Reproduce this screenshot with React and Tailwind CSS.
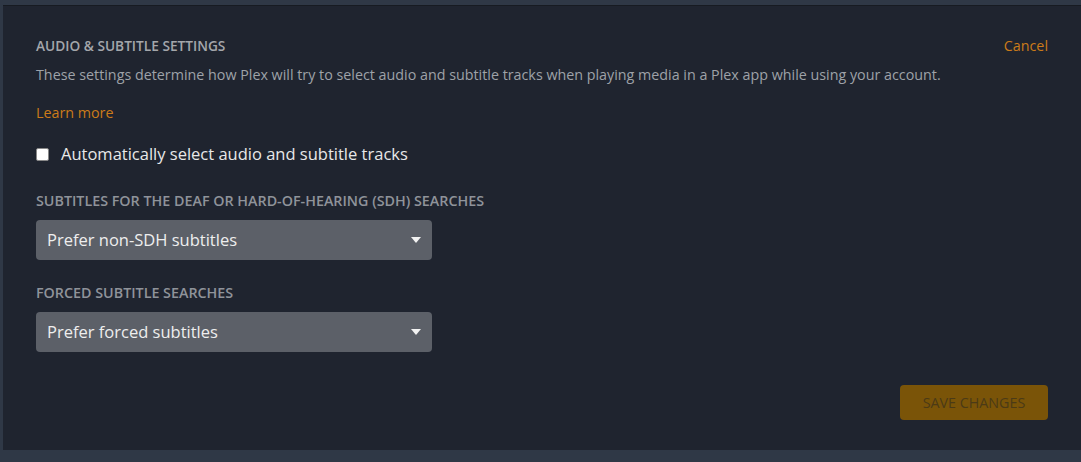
import React from "react";

const Caret = () => (
  <svg width="10" height="6" viewBox="0 0 10 6" className="shrink-0">
    <path d="M0 0 H10 L5 6 Z" fill="#f2f2f2" />
  </svg>
);

const Select = ({ value }) => (
  <div className="w-[396px] h-[40px] rounded bg-[#5c6068] flex items-center justify-between pl-[11px] pr-[11px] text-[16.5px] text-[#eeeeee]">
    <span>{value}</span>
    <Caret />
  </div>
);

export default function App() {
  return (
    <div
      className="w-[1081px] h-[462px] bg-[#2f3846] pl-[3px] pt-[5px] overflow-hidden"
      style={{ fontFamily: '"Open Sans", "Liberation Sans", sans-serif' }}
    >
      <div className="h-[445px] bg-[#1f242f] border-t border-[#171b22] pl-[33px] pr-[33px] pt-[30px]">
        <div className="flex items-start justify-between">
          <div>
            <h2 className="text-[13.7px] font-semibold text-[#a4a7ab] uppercase leading-[20px]">
              Audio &amp; Subtitle Settings
            </h2>
            <p className="mt-[9px] text-[14.3px] text-[#9ea2a8] leading-[20px]">
              These settings determine how Plex will try to select audio and subtitle tracks when playing media in a Plex app while using your account.
            </p>
            <p className="mt-[18px] text-[14.3px] text-[#cc7b19] leading-[20px]">Learn more</p>
          </div>
          <span className="text-[14.3px] text-[#cc7b19] leading-[20px]">Cancel</span>
        </div>

        <label className="mt-[19px] flex items-center gap-[12px]">
          <span className="w-[13px] h-[13px] bg-white rounded-[2px] border border-[#888]" />
          <span className="text-[16.5px] text-[#e8e8e8] leading-[24px]">
            Automatically select audio and subtitle tracks
          </span>
        </label>

        <div className="mt-[25px]">
          <div className="text-[14.3px] font-semibold text-[#8f939a] uppercase leading-[20px]">
            Subtitles for the deaf or hard-of-hearing (SDH) searches
          </div>
          <div className="mt-[9px]">
            <Select value="Prefer non-SDH subtitles" />
          </div>
        </div>

        <div className="mt-[23px]">
          <div className="text-[14.3px] font-semibold text-[#8f939a] uppercase leading-[20px]">
            Forced subtitle searches
          </div>
          <div className="mt-[9px]">
            <Select value="Prefer forced subtitles" />
          </div>
        </div>

        <div className="flex justify-end mt-[33px]">
          <button className="w-[148px] h-[35px] rounded bg-[#7a5408] text-[14.3px] text-[#4b3a16] uppercase">
            Save Changes
          </button>
        </div>
      </div>
    </div>
  );
}
